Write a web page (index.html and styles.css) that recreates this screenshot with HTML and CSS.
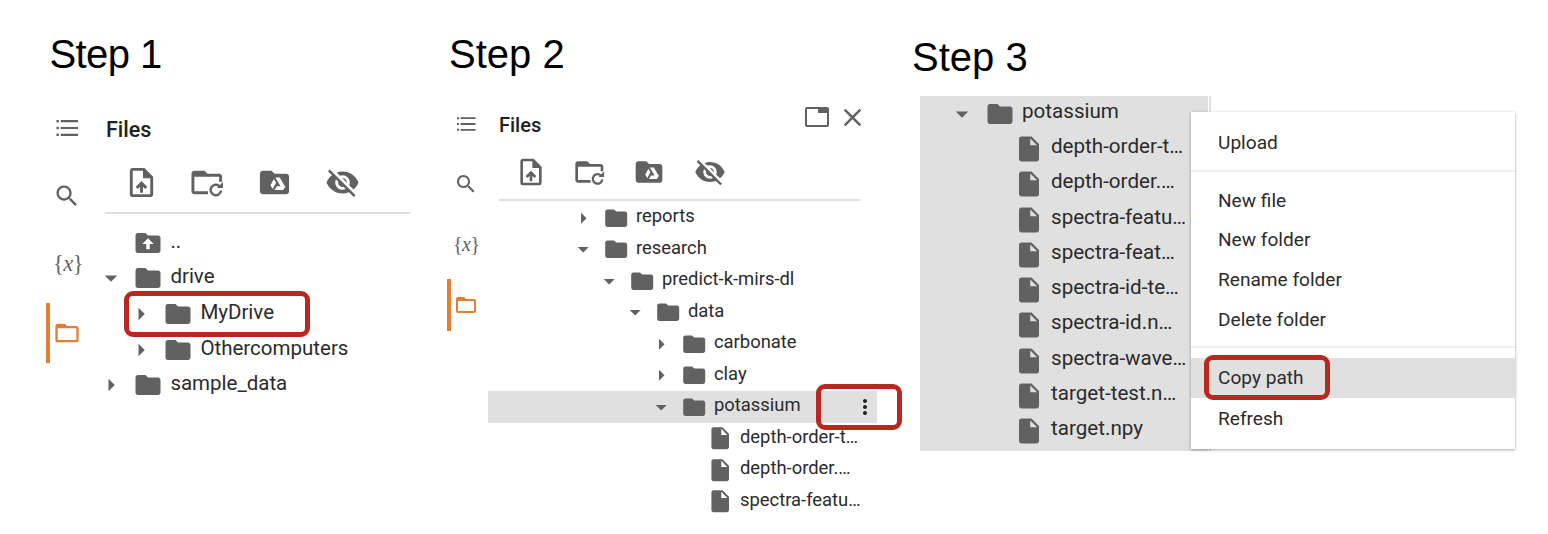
FILE: index.html
```html
<html>
<head>
<title>Copy path steps</title>
<link rel="stylesheet" href="styles.css">
</head>

<body>

<svg class="defs" width="0" height="0">
  <symbol id="i-list" viewBox="0 0 24 24"><path d="M3 5.2h2v2H3zM3 11h2v2H3zM3 16.8h2v2H3zM6.6 5.2h14.9v1.9H6.6zM6.6 11.05h14.9v1.9H6.6zM6.6 16.9h14.9v1.9H6.6z"/></symbol>
  <symbol id="i-search" viewBox="0 0 24 24"><path d="M15.5 14h-.79l-.28-.27C15.41 12.59 16 11.11 16 9.5 16 5.91 13.09 3 9.5 3S3 5.91 3 9.5 5.91 16 9.5 16c1.61 0 3.09-.59 4.23-1.57l.27.28v.79l5 4.99L20.49 19l-4.99-5zm-6 0C7.01 14 5 11.99 5 9.5S7.01 5 9.5 5 14 7.01 14 9.5 11.99 14 9.5 14z"/></symbol>
  <symbol id="i-folder-line" viewBox="0 0 24 24"><path d="M20 6h-8l-2-2H4c-1.1 0-1.99.9-1.99 2L2 18c0 1.1.9 2 2 2h16c1.1 0 2-.9 2-2V8c0-1.1-.9-2-2-2zm0 12H4V8h16v10z"/></symbol>
  <symbol id="i-folder" viewBox="0 0 24 24"><path d="M10 4H4c-1.1 0-1.99.9-1.99 2L2 18c0 1.1.9 2 2 2h16c1.1 0 2-.9 2-2V8c0-1.1-.9-2-2-2h-8l-2-2z"/></symbol>
  <symbol id="i-folder-up" viewBox="0 0 24 24"><path fill-rule="evenodd" d="M10 4H4c-1.1 0-1.99.9-1.99 2L2 18c0 1.1.9 2 2 2h16c1.1 0 2-.9 2-2V8c0-1.1-.9-2-2-2h-8l-2-2zM12 8.2l4.6 4.6h-3.2V17h-2.8v-4.2H7.4z"/></symbol>
  <symbol id="i-file" viewBox="0 0 24 24"><path d="M6 2c-1.1 0-1.99.9-1.99 2L4 20c0 1.1.89 2 1.99 2H18c1.1 0 2-.9 2-2V8l-6-6H6zm7 7V3.5L18.5 9H13z"/></symbol>
  <symbol id="i-upload" viewBox="0 0 24 24"><path d="M14 2H6c-1.1 0-1.99.9-1.99 2L4 20c0 1.1.89 1.99 1.99 1.99H18c1.1 0 2-.9 2-2V8l-6-6zm4 18H6V4h7v5h5v11zM8 15.01l1.41 1.41L11 14.84V19h2v-4.16l1.59 1.59L16 15.01 12.01 11z"/></symbol>
  <symbol id="i-refresh" viewBox="0 0 24 24">
    <path d="M12.4 20H3c-1.1 0-2-.9-2-2L1.01 6C1.01 4.9 1.9 4 3 4h7l2 2h8c1.1 0 2 .9 2 2v3.4h-2V8H3v10h9.4z"/>
    <path d="M21.3 17.6a3.6 3.6 0 1 1-1-3" fill="none" stroke="#616161" stroke-width="1.7"/>
    <path d="M22.6 11.6v4.2h-4.2z"/>
  </symbol>
  <symbol id="i-drive" viewBox="0 0 24 24">
    <path d="M10 4H4c-1.1 0-1.99.9-1.99 2L2 18c0 1.1.9 2 2 2h16c1.1 0 2-.9 2-2V8c0-1.1-.9-2-2-2h-8l-2-2z"/>
    <path fill="#fff" d="M12.6 8.6h3l3.9 6.6h-3zM11.6 9.6l1.5 2.6-2.4 4.3-1.5-2.6zM12 17.2l1.6-2.6h5.9l-1.6 2.6z"/>
  </symbol>
  <symbol id="i-eye-off" viewBox="0 0 24 24"><path d="M12 7c2.76 0 5 2.24 5 5 0 .65-.13 1.26-.36 1.83l2.92 2.92c1.51-1.26 2.7-2.89 3.43-4.75-1.73-4.39-6-7.5-11-7.5-1.4 0-2.74.25-3.98.7l2.16 2.16C10.74 7.13 11.35 7 12 7zM2 4.27l2.28 2.28.46.46C3.08 8.3 1.78 10.02 1 12c1.73 4.39 6 7.5 11 7.5 1.55 0 3.03-.3 4.38-.84l.42.42L19.73 22 21 20.73 3.27 3 2 4.27zM7.53 9.8l1.55 1.55c-.05.21-.08.43-.08.65 0 1.66 1.34 3 3 3 .22 0 .44-.03.65-.08l1.55 1.55c-.67.33-1.41.53-2.2.53-2.76 0-5-2.24-5-5 0-.79.2-1.53.53-2.2zm4.31-.78l3.15 3.15.02-.16c0-1.66-1.34-3-3-3l-.17.01z"/></symbol>
  <symbol id="i-down" viewBox="0 0 24 24"><path d="M7 10l5 5 5-5z"/></symbol>
  <symbol id="i-right" viewBox="0 0 24 24"><path d="M10 17l5-5-5-5z"/></symbol>
  <symbol id="i-window" viewBox="0 0 24 20"><path fill-rule="evenodd" d="M2 0h20c1.1 0 2 .9 2 2v16c0 1.1-.9 2-2 2H2c-1.1 0-2-.9-2-2V2C0 .9.9 0 2 0zm0 2v16h20V6H13V2z"/></symbol>
  <symbol id="i-close" viewBox="0 0 24 24"><path d="M23 3.2L20.8 1 12 9.8 3.2 1 1 3.2 9.8 12 1 20.8 3.2 23l8.8-8.8 8.8 8.8 2.2-2.2-8.8-8.8z"/></symbol>
  <symbol id="i-more" viewBox="0 0 24 24"><path d="M12 8c1.1 0 2-.9 2-2s-.9-2-2-2-2 .9-2 2 .9 2 2 2zm0 2c-1.1 0-2 .9-2 2s.9 2 2 2 2-.9 2-2-.9-2-2-2zm0 6c-1.1 0-2 .9-2 2s.9 2 2 2 2-.9 2-2-.9-2-2-2z"/></symbol>
</svg>

<div class="board">

  <section class="panel panel-one">
    <h2 class="step-title">Step 1</h2>
    <div class="sidebar">
      <nav class="rail">
        <div class="rail-item"><svg class="rail-icon"><use href="#i-list"/></svg></div>
        <div class="rail-item"><svg class="rail-icon"><use href="#i-search"/></svg></div>
        <div class="rail-item"><span class="vars">{<i>x</i>}</span></div>
        <div class="rail-item active"><svg class="rail-icon"><use href="#i-folder-line"/></svg></div>
      </nav>
      <div class="files">
        <div class="files-head"><span class="files-title">Files</span></div>
        <div class="toolbar">
          <svg class="tool"><use href="#i-upload"/></svg>
          <svg class="tool"><use href="#i-refresh"/></svg>
          <svg class="tool"><use href="#i-drive"/></svg>
          <svg class="tool"><use href="#i-eye-off"/></svg>
        </div>
        <div class="tree">
          <div class="row d0"><span class="caret"></span><svg class="ico"><use href="#i-folder-up"/></svg><span class="name">..</span></div>
          <div class="row d0"><svg class="caret"><use href="#i-down"/></svg><svg class="ico"><use href="#i-folder"/></svg><span class="name">drive</span></div>
          <div class="row d1"><svg class="caret"><use href="#i-right"/></svg><svg class="ico"><use href="#i-folder"/></svg><span class="name">MyDrive</span><span class="callout callout-drive"></span></div>
          <div class="row d1"><svg class="caret"><use href="#i-right"/></svg><svg class="ico"><use href="#i-folder"/></svg><span class="name">Othercomputers</span></div>
          <div class="row d0"><svg class="caret"><use href="#i-right"/></svg><svg class="ico"><use href="#i-folder"/></svg><span class="name">sample_data</span></div>
        </div>
      </div>
    </div>
  </section>

  <section class="panel panel-two">
    <h2 class="step-title">Step 2</h2>
    <div class="sidebar">
      <nav class="rail">
        <div class="rail-item"><svg class="rail-icon"><use href="#i-list"/></svg></div>
        <div class="rail-item"><svg class="rail-icon"><use href="#i-search"/></svg></div>
        <div class="rail-item"><span class="vars">{<i>x</i>}</span></div>
        <div class="rail-item active"><svg class="rail-icon"><use href="#i-folder-line"/></svg></div>
      </nav>
      <div class="files">
        <div class="files-head">
          <span class="files-title">Files</span>
          <div class="head-actions">
            <svg class="act-window"><use href="#i-window"/></svg>
            <svg class="act-close"><use href="#i-close"/></svg>
          </div>
        </div>
        <div class="toolbar">
          <svg class="tool"><use href="#i-upload"/></svg>
          <svg class="tool"><use href="#i-refresh"/></svg>
          <svg class="tool"><use href="#i-drive"/></svg>
          <svg class="tool"><use href="#i-eye-off"/></svg>
        </div>
        <div class="tree">
          <div class="row d0"><svg class="caret"><use href="#i-right"/></svg><svg class="ico"><use href="#i-folder"/></svg><span class="name">reports</span></div>
          <div class="row d0"><svg class="caret"><use href="#i-down"/></svg><svg class="ico"><use href="#i-folder"/></svg><span class="name">research</span></div>
          <div class="row d1"><svg class="caret"><use href="#i-down"/></svg><svg class="ico"><use href="#i-folder"/></svg><span class="name">predict-k-mirs-dl</span></div>
          <div class="row d2"><svg class="caret"><use href="#i-down"/></svg><svg class="ico"><use href="#i-folder"/></svg><span class="name">data</span></div>
          <div class="row d3"><svg class="caret"><use href="#i-right"/></svg><svg class="ico"><use href="#i-folder"/></svg><span class="name">carbonate</span></div>
          <div class="row d3"><svg class="caret"><use href="#i-right"/></svg><svg class="ico"><use href="#i-folder"/></svg><span class="name">clay</span></div>
          <div class="row d3 selected"><svg class="caret"><use href="#i-down"/></svg><svg class="ico"><use href="#i-folder"/></svg><span class="name">potassium</span><svg class="more"><use href="#i-more"/></svg><span class="callout callout-more"></span></div>
          <div class="row d4"><span class="caret"></span><svg class="ico"><use href="#i-file"/></svg><span class="name">depth-order-t…</span></div>
          <div class="row d4"><span class="caret"></span><svg class="ico"><use href="#i-file"/></svg><span class="name">depth-order.…</span></div>
          <div class="row d4"><span class="caret"></span><svg class="ico"><use href="#i-file"/></svg><span class="name">spectra-featu…</span></div>
        </div>
      </div>
    </div>
  </section>

  <section class="panel panel-three">
    <h2 class="step-title">Step 3</h2>
    <div class="pane">
      <div class="tree">
        <div class="row d0"><svg class="caret"><use href="#i-down"/></svg><svg class="ico"><use href="#i-folder"/></svg><span class="name">potassium</span></div>
        <div class="row d1"><span class="caret"></span><svg class="ico"><use href="#i-file"/></svg><span class="name">depth-order-t…</span></div>
        <div class="row d1"><span class="caret"></span><svg class="ico"><use href="#i-file"/></svg><span class="name">depth-order.…</span></div>
        <div class="row d1"><span class="caret"></span><svg class="ico"><use href="#i-file"/></svg><span class="name">spectra-featu…</span></div>
        <div class="row d1"><span class="caret"></span><svg class="ico"><use href="#i-file"/></svg><span class="name">spectra-feat…</span></div>
        <div class="row d1"><span class="caret"></span><svg class="ico"><use href="#i-file"/></svg><span class="name">spectra-id-te…</span></div>
        <div class="row d1"><span class="caret"></span><svg class="ico"><use href="#i-file"/></svg><span class="name">spectra-id.n…</span></div>
        <div class="row d1"><span class="caret"></span><svg class="ico"><use href="#i-file"/></svg><span class="name">spectra-wave…</span></div>
        <div class="row d1"><span class="caret"></span><svg class="ico"><use href="#i-file"/></svg><span class="name">target-test.n…</span></div>
        <div class="row d1"><span class="caret"></span><svg class="ico"><use href="#i-file"/></svg><span class="name">target.npy</span></div>
      </div>
      <div class="menu">
        <div class="menu-group first">
          <div class="menu-item">Upload</div>
        </div>
        <div class="menu-group">
          <div class="menu-item">New file</div>
          <div class="menu-item">New folder</div>
          <div class="menu-item">Rename folder</div>
          <div class="menu-item">Delete folder</div>
        </div>
        <div class="menu-group last">
          <div class="menu-item hover">Copy path<span class="callout callout-copy"></span></div>
          <div class="menu-item">Refresh</div>
        </div>
      </div>
    </div>
  </section>

</div>

</body>
</html>
```

FILE: styles.css
```css
html, body {
  margin: 0;
  background: #fff;
}

.defs {
  position: absolute;
}

svg {
  fill: #616161;
  flex: none;
}

.board {
  display: flex;
  align-items: flex-start;
  padding-left: 46px;
  font-family: Roboto, "Liberation Sans", sans-serif;
  color: #2b2b2b;
}

.step-title {
  box-sizing: border-box;
  height: 98px;
  margin: 0;
  padding: 31px 0 0 2px;
  font: 400 40px/46px "Liberation Sans", Arial, sans-serif;
  color: #000;
}

.panel-one {
  width: 401px;
  --icon: 30px;
  --gap: 7.2px;
  --indent: 30px;
  --rail-icon: 28px;
  --tool: 35px;
  font-size: 20.5px;
}

.panel-one .step-title {
  padding-left: 3.5px;
  letter-spacing: -0.6px;
}

.panel-two {
  width: 463px;
  --icon: 26.4px;
  --gap: 6.6px;
  --indent: 26px;
  --rail-icon: 24px;
  --tool: 32px;
  font-size: 18.4px;
}

.panel-three {
  width: 600px;
  --icon: 30px;
  --gap: 7.5px;
  --indent: 29px;
  font-size: 20.6px;
}

.sidebar {
  display: flex;
}

/* icon rail */
.rail {
  display: flex;
  flex-direction: column;
  gap: 8px;
  flex: none;
}

.panel-one .rail { width: 59px; }
.panel-two .rail { width: 52px; }

.rail-item {
  box-sizing: border-box;
  display: flex;
  align-items: center;
  border-left: 4px solid transparent;
  padding-left: 3px;
}

.panel-one .rail-item { height: 60px; }
.panel-two .rail-item { height: 52.3px; }
.panel-one .rail-item.active { margin-top: 1px; }

.rail-item.active {
  border-left-color: #e37f33;
}

.rail-item.active svg {
  fill: #e37f33;
}

.rail-icon {
  width: var(--rail-icon);
  height: var(--rail-icon);
}

.vars {
  width: var(--rail-icon);
  font-family: "Liberation Serif", serif;
  letter-spacing: -0.5px;
  color: #616161;
}

.panel-one .vars { font-size: 22.5px; }
.panel-two .vars { font-size: 20px; margin-left: -1px; }

/* files panel */
.panel-one .files { width: 305px; flex: none; }
.panel-two .files { width: 361px; flex: none; }

.files-head {
  display: flex;
  justify-content: space-between;
}

.panel-one .files-head { height: 62px; align-items: center; }
.panel-two .files-head { height: 54px; align-items: center; }

.files-title {
  font-weight: 500;
  color: #212121;
}

.panel-one .files-title { font-size: 21.5px; margin-left: 1px; }
.panel-two .files-title { font-size: 20px; }

.head-actions {
  display: flex;
  align-items: center;
  gap: 14px;
  margin: 0 -1.5px 16px 0;
}

.act-window {
  width: 24px;
  height: 20px;
}

.act-close {
  width: 19px;
  height: 19px;
}

.toolbar {
  display: flex;
  border-bottom: 2px solid #e0e0e0;
}

.panel-one .toolbar { gap: 31.5px; padding: 5px 0 12px 18.5px; }
.panel-two .toolbar { gap: 27px; padding: 4px 0 11px 16px; }

.tool {
  width: var(--tool);
  height: var(--tool);
}

.tool:last-child {
  margin-left: 2px;
}

/* file tree */
.panel-one .tree { margin: 11px 0 0 -9px; }
.panel-two .tree { margin: 1px -17px 0 -11px; }

.row {
  position: relative;
  display: flex;
  align-items: center;
  gap: var(--gap);
  white-space: nowrap;
}

.panel-one .row { height: 35.6px; }
.panel-two .row { height: 31.5px; }
.panel-three .row { height: 35.3px; }

.panel-two .row { padding-left: 82px; }
.panel-two .row.d1 { padding-left: 108px; }
.panel-two .row.d2 { padding-left: 134px; }
.panel-two .row.d3 { padding-left: 160px; }
.panel-two .row.d4 { padding-left: 186px; }

.panel-one .row.d1,
.panel-three .row.d1 { padding-left: var(--indent); }

.row.selected {
  background: #e0e0e0;
}

.caret, .ico {
  width: var(--icon);
  height: var(--icon);
  flex: none;
}

.name {
  padding-bottom: 4px;
}

.panel-three .name {
  padding-bottom: 6px;
}

.more {
  position: absolute;
  left: 365px;
  top: 4px;
  width: 24px;
  height: 24px;
  fill: #212121;
}

/* step 3 */
.panel-three .step-title {
  height: 96px;
  padding-top: 34px;
}

.pane {
  position: relative;
  box-sizing: border-box;
  width: 291px;
  height: 355px;
  margin-left: 10px;
  border-right: 2px solid #e0e0e0;
}

.pane .tree {
  box-sizing: border-box;
  width: 288px;
  height: 100%;
  padding-left: 27px;
  background: #e0e0e0;
}

.menu {
  position: absolute;
  left: 271px;
  top: 16px;
  box-sizing: border-box;
  width: 324px;
  height: 337px;
  background: #fff;
  box-shadow: 0 1px 3px rgba(0, 0, 0, 0.35);
  font-size: 19.1px;
}

.menu-group {
  padding: 8px 0;
  border-bottom: 2px solid #eee;
}

.menu-group.first { padding-top: 10px; }
.menu-group.last { border-bottom: 0; padding-top: 10px; }

.menu-item {
  position: relative;
  height: 39.7px;
  line-height: 42px;
  padding-left: 27px;
}

.menu-item.hover {
  background: #e0e0e0;
  line-height: 40px;
}

/* red highlight boxes */
.callout {
  position: absolute;
  box-sizing: border-box;
  border: 5.5px solid #b9281f;
  border-radius: 9px;
}

.callout-drive {
  left: 28px;
  top: -5px;
  width: 186px;
  height: 46px;
}

.callout-more {
  left: 328px;
  top: -7px;
  width: 86px;
  height: 46px;
}

.callout-copy {
  left: 13px;
  top: -3px;
  width: 126px;
  height: 45px;
}
```
